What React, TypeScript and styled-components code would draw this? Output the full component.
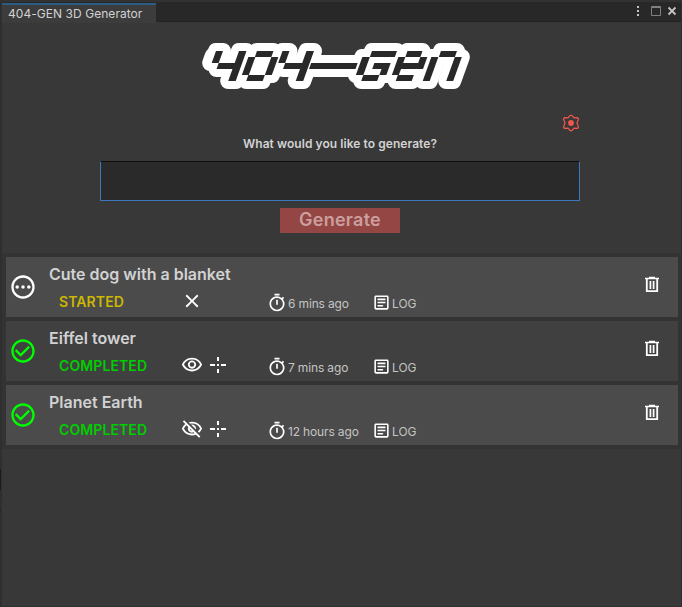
import React from "react";
import styled, { createGlobalStyle } from "styled-components";
import {
  MdCheckCircleOutline,
  MdClose,
  MdOutlineArticle,
  MdOutlinePending,
  MdOutlineTimer,
  MdOutlineVisibility,
  MdOutlineVisibilityOff,
} from "react-icons/md";

const GlobalStyle = createGlobalStyle`
  * { box-sizing: border-box; }
  body { margin: 0; background: #383838; }
`;

const Window = styled.div`
  width: 682px;
  height: 607px;
  overflow: hidden;
  display: flex;
  flex-direction: column;
  padding-left: 2px;
  background:
    linear-gradient(#1c1c1c, #1c1c1c) 0 469px / 1px 21px no-repeat,
    linear-gradient(#1c1c1c, #1c1c1c) 0 510px / 1px 1px no-repeat,
    linear-gradient(#2f2f2f, #2f2f2f) 0 0 / 2px 100% no-repeat,
    #383838;
  border-right: 1px solid #303030;
  border-bottom: 1px solid #303030;
  color: #d2d2d2;
  font-family: Inter, "Liberation Sans", sans-serif;
`;

const TitleBar = styled.header`
  height: 22px;
  flex: none;
  display: flex;
  align-items: stretch;
  justify-content: space-between;
  background: #282828;
  border-top: 2px solid #323232;
`;

const Tab = styled.div`
  width: 154px;
  height: 20px;
  margin-top: 1px;
  padding-left: 6px;
  border-top: 2px solid #2c5d87;
  background: #3c3c3c;
  font-size: 12px;
  line-height: 18px;
  letter-spacing: 0.05px;
  white-space: nowrap;
`;

const WindowButtons = styled.div`
  flex: 1;
  display: flex;
  justify-content: flex-end;
  border-bottom: 1px solid #232323;
  svg { display: block; }
`;

const Generator = styled.section`
  height: 231px;
  flex: none;
  display: flex;
  flex-direction: column;
  align-items: center;
  padding-right: 3px;
`;

const LogoArea = styled.div`
  height: 91px;
  padding: 18px 0 0 0;
  margin-right: 6px;
  svg { display: block; }
`;

const SettingsRow = styled.div`
  width: 480px;
  height: 22px;
  padding-top: 1px;
  display: flex;
  justify-content: flex-end;
  svg { display: block; }
`;

const Question = styled.label`
  height: 26px;
  font-size: 12px;
  font-weight: 600;
  line-height: 18px;
  letter-spacing: 0.06px;
`;

const Prompt = styled.input`
  width: 480px;
  height: 40px;
  flex: none;
  border: 1px solid #3a79bb;
  border-top-color: #0d0d0d;
  background: #2a2a2a;
  outline: none;
`;

const GenerateButton = styled.button`
  width: 120px;
  height: 25px;
  flex: none;
  display: flex;
  align-items: flex-start;
  justify-content: center;
  margin-top: 7px;
  padding: 0;
  border: 0;
  background: #934643;
  color: #cb9f9e;
  font: 600 18px/24px Inter, sans-serif;
  letter-spacing: 0.25px;
`;

const TaskList = styled.main`
  display: flex;
  flex-direction: column;
  gap: 4px;
  padding: 4px;
  padding-right: 3px;
  background: #333333;
`;

const Task = styled.article<{ $shade: string }>`
  height: 60px;
  display: grid;
  grid-template-columns: 43px 1fr 52px;
  background: ${(p) => p.$shade};
`;

const StateIcon = styled.div<{ $color: string }>`
  padding: 16px 0 0 3px;
  color: ${(p) => p.$color};
  svg { display: block; }
`;

const TaskBody = styled.div`
  min-width: 0;
`;

const TaskTitle = styled.h2`
  height: 33px;
  margin: 0;
  padding-top: 7px;
  font-size: 16px;
  line-height: 20px;
  font-weight: 600;
`;

const Details = styled.div`
  height: 27px;
  display: grid;
  grid-template-columns: 122px 95.5px 105px 80px;
`;

const Status = styled.span<{ $color: string }>`
  padding: 2px 0 0 10px;
  color: ${(p) => p.$color};
  font-size: 14px;
  font-weight: 600;
  line-height: 20px;
  letter-spacing: 0.1px;
`;

const Actions = styled.div`
  display: flex;
  gap: 5px;
  padding: 0 0 0 10px;
  color: #ffffff;
  svg { display: block; }
`;

const Meta = styled.div<{ $tracking?: number }>`
  display: flex;
  align-items: flex-start;
  gap: 1.5px;
  padding-top: 3px;
  font-size: 12px;
  line-height: 22px;
  letter-spacing: ${(p) => p.$tracking ?? 0}px;
  white-space: nowrap;
  color: #c4c4c4;
  svg { flex: none; color: #ffffff; }
`;

const DeleteButton = styled.button`
  padding: 0;
  border: 0;
  background: none;
  width: 52px;
  height: 56px;
  svg { display: block; margin: 0 auto; }
`;

/* Logo blocks: left, right, top and bottom before the italic slant. */
const blocks = [
  [216, 223, 51, 63], [223, 240, 63, 69], [239, 246.5, 51, 81],
  [257, 273.5, 51, 57], [250.5, 257.5, 57, 75], [273.5, 280.5, 57, 75], [257, 273.5, 75, 81],
  [282.5, 289.5, 51, 63], [289.5, 307, 63, 69], [306.5, 314, 51, 81],
  [315.5, 362, 63, 69],
  [372, 397, 51, 57], [364.5, 372, 57, 75], [378.7, 395, 63, 69], [388, 395, 69, 75], [372, 388, 75, 81],
  [407.5, 422.5, 51, 57], [400.5, 407.5, 57, 75], [422.5, 429.5, 57, 69], [407, 423, 63, 69], [406.5, 422.5, 75, 81],
  [441, 457, 51, 57], [433.5, 440.5, 57, 81], [457, 464, 57, 81],
];

function Logo() {
  const rects = blocks.map(([l, r, t, b], i) => (
    <rect key={i} x={l} y={t - 51} width={r - l} height={b - t} vectorEffect="non-scaling-stroke" />
  ));
  const slant = "matrix(1 0 -0.36 1 0 51)";
  return (
    <svg width="272" height="50" viewBox="201 40 272 50" role="img" aria-label="404-GEN">
      <g transform={slant} fill="#fff" stroke="#fff" strokeWidth="16" strokeLinejoin="round">
        {rects}
        <rect x="214.5" y="5" width="8" height="7" vectorEffect="non-scaling-stroke" />
      </g>
      <g transform={slant} fill="#282828">{rects}</g>
    </svg>
  );
}

function Gear() {
  return (
    <svg width="18" height="18" viewBox="0 0 18 18" fill="none" stroke="#f2564f" strokeWidth="1.25" strokeLinejoin="round">
      <path d="M8.2 1.3h1.6L12 3.9l3.6-.3.9 1.5L15 9l1.5 3.9-.9 1.5-3.6-.3-2.2 2.6H8.2L6 14.1l-3.6.3-.9-1.5L3 9 1.500 5.1l.9-1.500 3.600.3z" />
      <circle cx="9" cy="9" r="2.9" fill="#f2564f" stroke="none" />
    </svg>
  );
}

function Target() {
  return (
    <svg width="20" height="22" viewBox="0 -1 20 22" stroke="#fff" strokeWidth="2">
      <path d="M10 2v4M10 14v4M2 10h5M13 10h5M9 10h2" />
    </svg>
  );
}

function Trash() {
  return (
    <svg width="18" height="18" viewBox="0 0 18 18" fill="none" stroke="#fff">
      <path d="M6 1.5h6M2 2.5h14" strokeWidth="1.4" />
      <path d="M3.8 3v12.2h10.4V3" strokeWidth="1.8" />
      <path d="M7.4 5v8M10.6 5v8" strokeWidth="1.7" />
    </svg>
  );
}

type Item = {
  title: string;
  status: "STARTED" | "COMPLETED";
  time: string;
  visible?: boolean;
};

const items: Item[] = [
  { title: "Cute dog with a blanket", status: "STARTED", time: "6 mins ago" },
  { title: "Eiffel tower", status: "COMPLETED", time: "7 mins ago", visible: true },
  { title: "Planet Earth", status: "COMPLETED", time: "12 hours ago", visible: false },
];

function TaskRow({ item, index }: { item: Item; index: number }) {
  const done = item.status === "COMPLETED";
  return (
    <Task $shade={index % 2 ? "#404040" : "#4b4b4b"}>
      <StateIcon $color={done ? "#00ff00" : "#ffffff"}>
        {done ? <MdCheckCircleOutline size={28} /> : <MdOutlinePending size={28} />}
      </StateIcon>
      <TaskBody>
        <TaskTitle>{item.title}</TaskTitle>
        <Details>
          <Status $color={done ? "#00cc00" : "#ccb800"}>{item.status}</Status>
          <Actions>
            {!done && <MdClose size={22} />}
            {done && (item.visible ? <MdOutlineVisibility size={22} /> : <MdOutlineVisibilityOff size={22} />)}
            {done && <Target />}
          </Actions>
          <Meta $tracking={-0.15}><MdOutlineTimer size={20} />{item.time}</Meta>
          <Meta><MdOutlineArticle size={19} />LOG</Meta>
        </Details>
      </TaskBody>
      <DeleteButton aria-label="Delete"><Trash /></DeleteButton>
    </Task>
  );
}

export default function App() {
  return (
    <>
      <GlobalStyle />
      <Window>
        <TitleBar>
          <Tab>404-GEN 3D Generator</Tab>
          <WindowButtons>
            <svg width="50" height="19" viewBox="631 2 50 19" fill="none">
              <path d="M637 6h2v2h-2zM637 10h2v2h-2zM637 14h2v2h-2z" fill="#c4c4c4" />
              <path d="M651.5 6.5h9v9h-9zM651 7.5h10" stroke="#808080" />
              <path d="M668.5 7.5l7 7M675.5 7.5l-7 7" stroke="#c4c4c4" strokeWidth="1.8" />
            </svg>
          </WindowButtons>
        </TitleBar>
        <Generator>
          <LogoArea><Logo /></LogoArea>
          <SettingsRow><Gear /></SettingsRow>
          <Question htmlFor="prompt">What would you like to generate?</Question>
          <Prompt id="prompt" />
          <GenerateButton>Generate</GenerateButton>
        </Generator>
        <TaskList>
          {items.map((item, i) => <TaskRow key={item.title} item={item} index={i} />)}
        </TaskList>
      </Window>
    </>
  );
}
